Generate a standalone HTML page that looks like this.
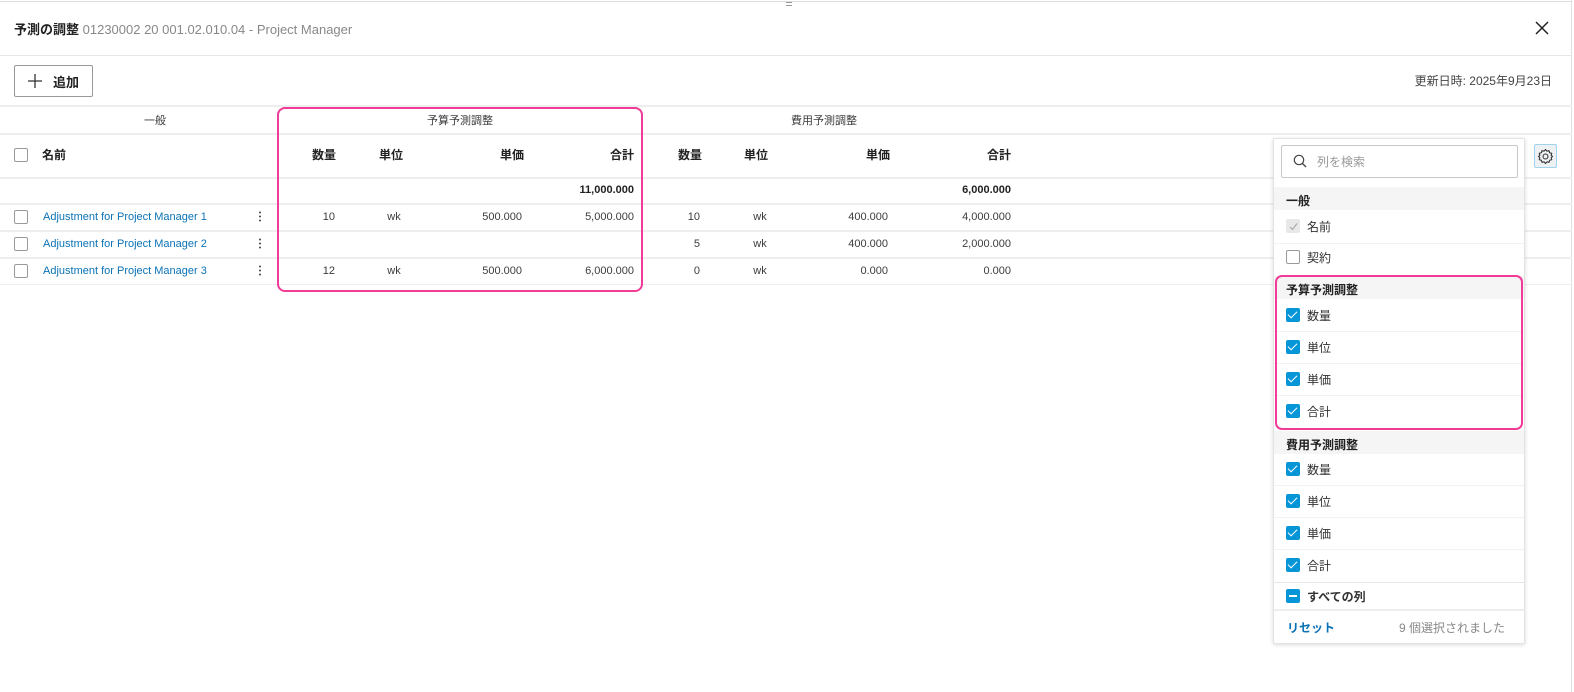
<!DOCTYPE html>
<html><head><meta charset="utf-8"><style>
*{box-sizing:border-box;margin:0;padding:0}
body{width:1574px;height:692px;background:#fff;position:relative;overflow:hidden;font-family:"Liberation Sans","Noto Sans CJK JP",sans-serif;color:#3c3c3c;font-size:12px}
.a{position:absolute;white-space:nowrap}
.hl{position:absolute;left:0;width:1572px;height:1px;background:#e6e6e6}
.r{text-align:right}
.c{text-align:center}
.b{font-weight:bold;color:#222}
.cb{position:absolute;width:14px;height:14px;border:1px solid #9a9a9a;border-radius:2px;background:#fff}
.ck{position:absolute;width:14px;height:14px;border-radius:2px;background:#0696d7}
.ck:after{content:"";position:absolute;left:4px;top:1px;width:4px;height:8px;border:solid #fff;border-width:0 1.5px 1.5px 0;transform:rotate(45deg)}
.lnk{color:#0a72b6}
.sec{position:absolute;left:1274px;width:250px;height:23px;background:#f5f5f5;font-weight:bold;color:#222;font-size:12px;padding:5px 0 0 12px}
.it{position:absolute;left:1307px;font-size:12px;color:#333}
</style></head><body>
<div class="hl" style="top:1px;background:#ddd"></div>
<div class="a" style="left:786px;top:2px;width:6px;height:4px;border-top:1px solid #999;border-bottom:1px solid #999"></div>
<div class="a" style="left:1571px;top:0;width:1px;height:692px;background:#e0e0e0"></div>
<div class="a b" style="left:14px;top:19px;font-size:13px">予測の調整 <span style="font-weight:normal;color:#888">01230002 20 001.02.010.04 - Project Manager</span></div>
<svg class="a" style="left:1535px;top:21px" width="14" height="14"><path d="M1 1L13 13M13 1L1 13" stroke="#222" stroke-width="1.5"/></svg>
<div class="hl" style="top:55px"></div>
<div class="a" style="left:14px;top:65px;width:79px;height:32px;border:1px solid #999;border-radius:2px"></div>
<svg class="a" style="left:27px;top:73px" width="16" height="16"><path d="M8 1V15M1 8H15" stroke="#333" stroke-width="1.3"/></svg>
<div class="a b" style="left:53px;top:72px;font-size:13px">追加</div>
<div class="a" style="right:22px;top:72px;font-size:12px;color:#444">更新日時: 2025年9月23日</div>
<div class="hl" style="top:105px;height:2px;background:#eee"></div>
<div class="a c" style="left:135px;width:40px;top:112px;font-size:11px">一般</div>
<div class="a c" style="left:410px;width:100px;top:112px;font-size:11px">予算予測調整</div>
<div class="a c" style="left:774px;width:100px;top:112px;font-size:11px">費用予測調整</div>
<div class="hl" style="top:133px;height:2px;background:#eee"></div>
<div class="cb" style="left:14px;top:148px"></div>
<div class="a b" style="left:42px;top:146px;font-size:12px">名前</div>
<div class="a b r" style="left:286px;width:50px;top:146px">数量</div>
<div class="a b c" style="left:366px;width:50px;top:146px">単位</div>
<div class="a b r" style="left:474px;width:50px;top:146px">単価</div>
<div class="a b r" style="left:584px;width:50px;top:146px">合計</div>
<div class="a b r" style="left:652px;width:50px;top:146px">数量</div>
<div class="a b c" style="left:731px;width:50px;top:146px">単位</div>
<div class="a b r" style="left:840px;width:50px;top:146px">単価</div>
<div class="a b r" style="left:961px;width:50px;top:146px">合計</div>
<div class="hl" style="top:177px;height:2px;background:#eee"></div>
<div class="a b r" style="left:534px;width:100px;top:184px;font-size:11px">11,000.000</div>
<div class="a b r" style="left:911px;width:100px;top:184px;font-size:11px">6,000.000</div>
<div class="hl" style="top:203px;height:2px;background:#eee"></div>
<div class="hl" style="top:230px;height:2px;background:#eee"></div>
<div class="hl" style="top:257px;height:2px;background:#eee"></div>
<div class="hl" style="top:284px;height:1px;background:#eee"></div>

<div class="cb" style="left:14px;top:210px"></div>
<div class="a lnk" style="left:43px;top:211px;font-size:11px">Adjustment for Project Manager 1</div>
<div class="cb" style="left:14px;top:237px"></div>
<div class="a lnk" style="left:43px;top:238px;font-size:11px">Adjustment for Project Manager 2</div>
<div class="cb" style="left:14px;top:264px"></div>
<div class="a lnk" style="left:43px;top:265px;font-size:11px">Adjustment for Project Manager 3</div>
<svg class="a" style="left:258px;top:211px" width="4" height="70"><g fill="#444"><circle cx="2" cy="1.5" r="1"/><circle cx="2" cy="5.5" r="1"/><circle cx="2" cy="9.5" r="1"/><circle cx="2" cy="28.5" r="1"/><circle cx="2" cy="32.5" r="1"/><circle cx="2" cy="36.5" r="1"/><circle cx="2" cy="55.5" r="1"/><circle cx="2" cy="59.5" r="1"/><circle cx="2" cy="63.5" r="1"/></g></svg>

<div style="font-size:11px">
<div class="a r" style="left:285px;width:50px;top:211px">10</div>
<div class="a c" style="left:369px;width:50px;top:211px">wk</div>
<div class="a r" style="left:442px;width:80px;top:211px">500.000</div>
<div class="a r" style="left:534px;width:100px;top:211px">5,000.000</div>
<div class="a r" style="left:650px;width:50px;top:211px">10</div>
<div class="a c" style="left:735px;width:50px;top:211px">wk</div>
<div class="a r" style="left:808px;width:80px;top:211px">400.000</div>
<div class="a r" style="left:911px;width:100px;top:211px">4,000.000</div>
<div class="a r" style="left:650px;width:50px;top:238px">5</div>
<div class="a c" style="left:735px;width:50px;top:238px">wk</div>
<div class="a r" style="left:808px;width:80px;top:238px">400.000</div>
<div class="a r" style="left:911px;width:100px;top:238px">2,000.000</div>
<div class="a r" style="left:285px;width:50px;top:265px">12</div>
<div class="a c" style="left:369px;width:50px;top:265px">wk</div>
<div class="a r" style="left:442px;width:80px;top:265px">500.000</div>
<div class="a r" style="left:534px;width:100px;top:265px">6,000.000</div>
<div class="a r" style="left:650px;width:50px;top:265px">0</div>
<div class="a c" style="left:735px;width:50px;top:265px">wk</div>
<div class="a r" style="left:808px;width:80px;top:265px">0.000</div>
<div class="a r" style="left:911px;width:100px;top:265px">0.000</div>
</div>
<div class="a" style="left:277px;top:107px;width:366px;height:185px;border:2px solid #f03c96;border-radius:8px"></div>

<div class="a" style="left:1534px;top:144px;width:23px;height:24px;border:1px solid #9fd3ef;border-radius:2px;background:#eef1f3"></div>
<svg class="a" style="left:1537px;top:148px" width="17" height="17" viewBox="0 0 24 24"><path d="M12 2l2 2.5 3-.8.8 3 3 .8-.8 3L22 12l-2 1.5.8 3-3 .8-.8 3-3-.8L12 22l-2-2.5-3 .8-.8-3-3-.8.8-3L2 12l2-1.5-.8-3 3-.8.8-3 3 .8z" fill="none" stroke="#333" stroke-width="1.5" stroke-linejoin="round"/><circle cx="12" cy="12" r="3.5" fill="none" stroke="#333" stroke-width="1.5"/></svg>

<div class="a" style="left:1273px;top:138px;width:252px;height:506px;background:#fff;border:1px solid #e3e3e3;border-radius:2px;box-shadow:0 1px 4px rgba(0,0,0,.15)"></div>
<div class="a" style="left:1281px;top:145px;width:237px;height:33px;border:1px solid #c8c8c8;border-radius:2px"></div>
<svg class="a" style="left:1293px;top:154px" width="14" height="14"><circle cx="6" cy="6" r="4.7" fill="none" stroke="#444" stroke-width="1.2"/><path d="M9.5 9.5L13 13" stroke="#444" stroke-width="1.3"/></svg>
<div class="a" style="left:1317px;top:153px;font-size:12px;color:#999">列を検索</div>
<div class="sec" style="top:187px">一般</div>
<div class="a" style="left:1286px;top:219px;width:14px;height:14px;background:#e8e8e8;border-radius:2px"></div>
<svg class="a" style="left:1289px;top:222px" width="9" height="9"><path d="M1 5l2.5 2.5L8 1.5" fill="none" stroke="#aaa" stroke-width="1.2"/></svg>
<div class="it" style="top:218px">名前</div>
<div class="a" style="left:1274px;top:243px;width:250px;height:1px;background:#f2f2f2"></div>
<div class="cb" style="left:1286px;top:250px"></div>
<div class="it" style="top:249px">契約</div>
<div class="sec" style="top:276px">予算予測調整</div>
<div class="ck" style="left:1286px;top:308px"></div><div class="it" style="top:307px">数量</div>
<div class="ck" style="left:1286px;top:340px"></div><div class="it" style="top:339px">単位</div>
<div class="ck" style="left:1286px;top:372px"></div><div class="it" style="top:371px">単価</div>
<div class="ck" style="left:1286px;top:404px"></div><div class="it" style="top:403px">合計</div>
<div class="a" style="left:1274px;top:331px;width:250px;height:1px;background:#f2f2f2"></div>
<div class="a" style="left:1274px;top:363px;width:250px;height:1px;background:#f2f2f2"></div>
<div class="a" style="left:1274px;top:395px;width:250px;height:1px;background:#f2f2f2"></div>
<div class="a" style="left:1275px;top:275px;width:248px;height:155px;border:2px solid #f03c96;border-radius:7px"></div>
<div class="sec" style="top:431px">費用予測調整</div>
<div class="ck" style="left:1286px;top:462px"></div><div class="it" style="top:461px">数量</div>
<div class="ck" style="left:1286px;top:494px"></div><div class="it" style="top:493px">単位</div>
<div class="ck" style="left:1286px;top:526px"></div><div class="it" style="top:525px">単価</div>
<div class="ck" style="left:1286px;top:558px"></div><div class="it" style="top:557px">合計</div>
<div class="a" style="left:1274px;top:485px;width:250px;height:1px;background:#f2f2f2"></div>
<div class="a" style="left:1274px;top:517px;width:250px;height:1px;background:#f2f2f2"></div>
<div class="a" style="left:1274px;top:549px;width:250px;height:1px;background:#f2f2f2"></div>
<div class="a" style="left:1274px;top:582px;width:250px;height:1px;background:#e6e6e6"></div>
<div class="a" style="left:1286px;top:589px;width:14px;height:14px;background:#0696d7;border-radius:2px"></div>
<div class="a" style="left:1289px;top:595px;width:8px;height:2px;background:#fff"></div>
<div class="it b" style="top:588px">すべての列</div>
<div class="a" style="left:1274px;top:609px;width:250px;height:2px;background:#eee"></div>
<div class="a" style="left:1287px;top:619px;font-size:12px;color:#0a72b6;font-weight:bold">リセット</div>
<div class="a" style="left:1399px;top:619px;font-size:12px;color:#888">9 個選択されました</div>
</body></html>
